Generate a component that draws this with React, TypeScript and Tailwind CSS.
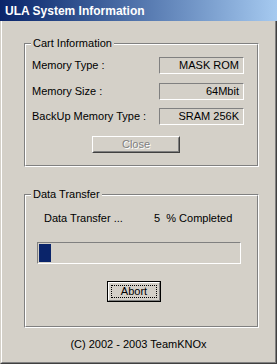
import React from 'react';

function GroupBox({ title, height, children }: { title: string; height: number; children: React.ReactNode }) {
    return (
        <div
            className="relative ml-[22px] w-[235px] border border-t-[#808080] border-l-[#808080] border-r-white border-b-white"
            style={{ height }}
        >
            <div className="h-full border border-t-white border-l-white border-r-[#808080] border-b-[#808080]">
                {children}
            </div>
            <span className="absolute left-[6px] -top-[7px] bg-[#d4d0c8] px-[2px] leading-[13px]">{title}</span>
        </div>
    );
}

function InfoRow({ label, value, className }: { label: string; value: string; className?: string }) {
    return (
        <div className={`flex items-center h-[17px] pl-[6px] ${className ?? ''}`}>
            <span className="w-[127px] leading-[13px]">{label}</span>
            <div className="w-[85px] h-[17px] flex items-center justify-end pr-[4px] border border-t-[#808080] border-l-[#808080] border-r-white border-b-white leading-[13px]">
                {value}
            </div>
        </div>
    );
}

export default function App() {
    return (
        <div
            className="w-[277px] h-[364px] bg-[#d4d0c8] flex flex-col text-[11px] text-black"
            style={{ fontFamily: '"Liberation Sans", Arial, sans-serif' }}
        >
            {/* Title bar */}
            <div className="h-[21px] shrink-0 flex items-center pl-[5px] bg-gradient-to-r from-[#0a246a] to-[#a6caf0]">
                <span className="text-white font-bold text-[12px] leading-[14px]">ULA System Information</span>
            </div>

            <div className="flex-1 flex flex-col border border-t-0 border-l-[#d4d0c8] border-r-[#404040] border-b-[#404040]">
                <div className="flex-1 flex flex-col border border-t-0 border-l-white border-r-[#808080] border-b-[#808080]">
                    <div className="h-[22px]" />

                    {/* Cart Information */}
                    <GroupBox title="Cart Information" height={124}>
                        <InfoRow label="Memory Type :" value="MASK ROM" className="mt-[12px]" />
                        <InfoRow label="Memory Size :" value="64Mbit" className="mt-[9px]" />
                        <InfoRow label="BackUp Memory Type :" value="SRAM 256K" className="mt-[8px]" />
                        <div className="mt-[11px] ml-[66px] w-[88px] h-[17px] border border-t-white border-l-white border-r-[#404040] border-b-[#404040]">
                            <div className="h-full flex items-center justify-center border border-transparent border-r-[#808080] border-b-[#808080] text-[#808080] [text-shadow:1px_1px_0_#fff] leading-[13px]">
                                Close
                            </div>
                        </div>
                    </GroupBox>

                    <div className="h-[27px]" />

                    {/* Data Transfer */}
                    <GroupBox title="Data Transfer" height={134}>
                        <div className="mt-[16px] flex items-center h-[13px] leading-[13px]">
                            <span className="ml-[18px] w-[110px]">Data Transfer ...</span>
                            <span>5&nbsp;&nbsp;% Completed</span>
                        </div>
                        <div className="mt-[17px] ml-[11px] w-[204px] h-[22px] p-[1px] border border-t-[#808080] border-l-[#808080] border-r-white border-b-white">
                            <div className="h-full w-[12px] bg-[#0a246a]" />
                        </div>
                        <div className="mt-[17px] ml-[81px] w-[54px] h-[21px] border border-black">
                            <div className="h-full p-[2px] border border-t-white border-l-white border-r-[#808080] border-b-[#808080]">
                                <div className="h-full flex items-center justify-center border border-dotted border-black leading-[13px]">
                                    Abort
                                </div>
                            </div>
                        </div>
                    </GroupBox>

                    <div className="flex-1 flex items-center justify-center pb-[1px]">
                        <span className="leading-[13px]">(C) 2002 - 2003 TeamKNOx</span>
                    </div>
                </div>
            </div>
        </div>
    );
}
